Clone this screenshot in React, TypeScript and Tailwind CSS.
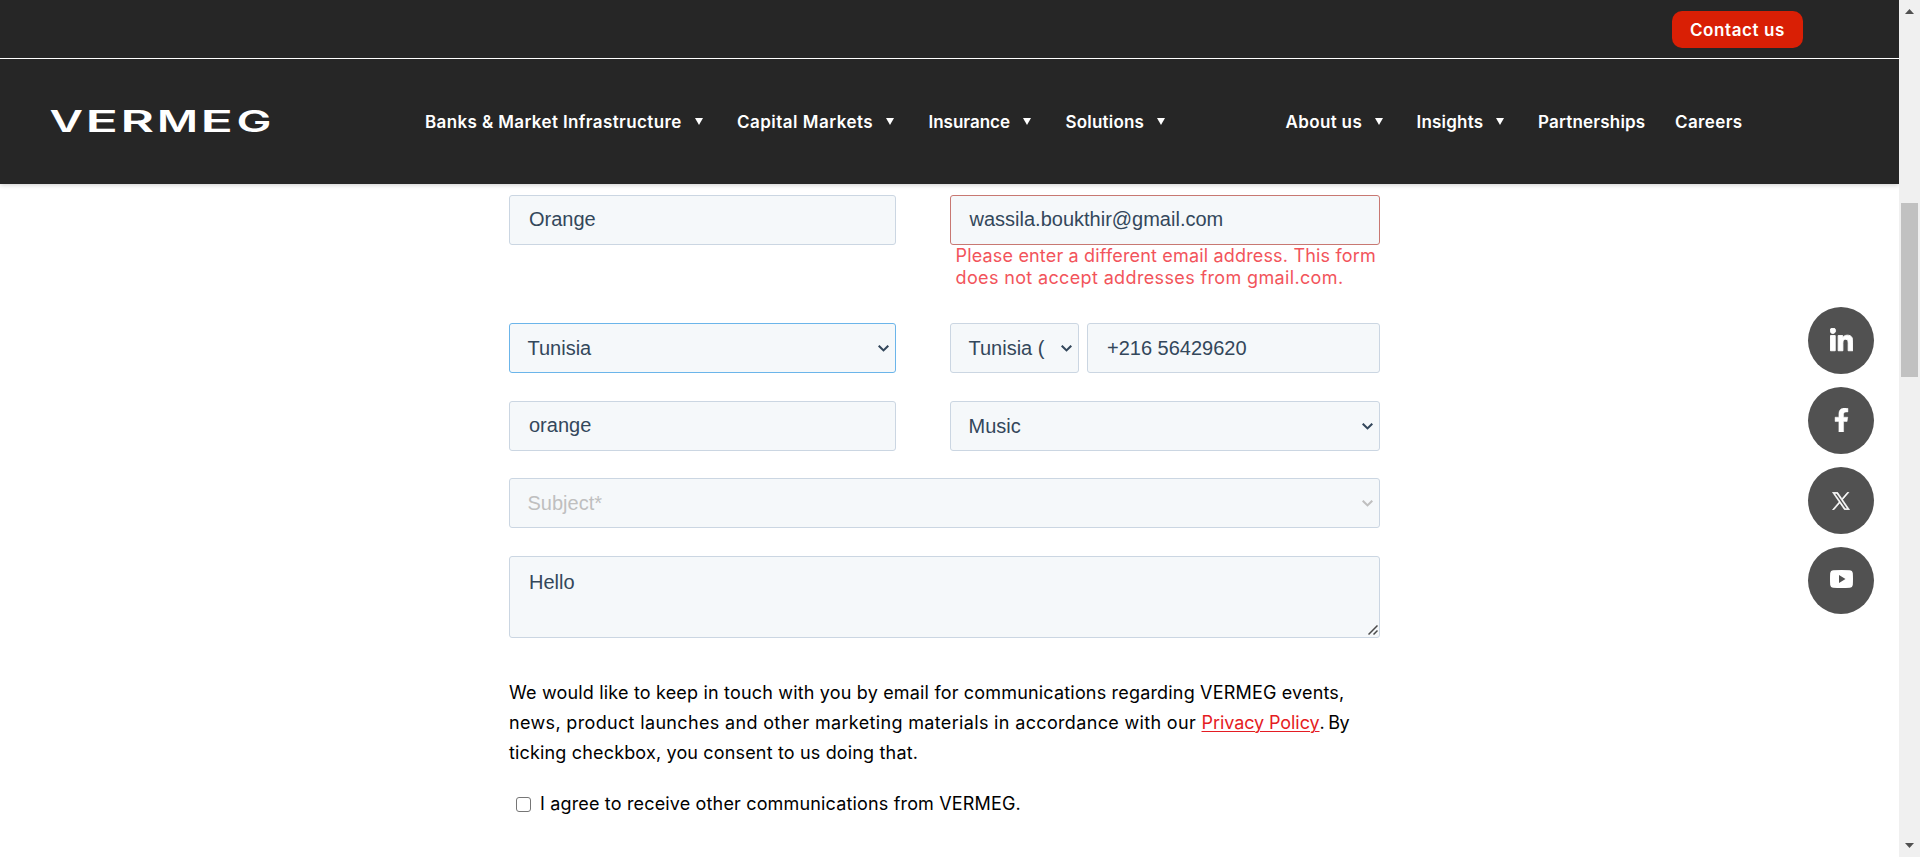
import type { ReactNode } from "react";
import { FaFacebookF, FaLinkedinIn } from "react-icons/fa";

function Caret() {
  return (
    <svg className="ml-[13px] h-[7px] w-2 shrink-0" viewBox="0 0 8 7">
      <path d="M0 0h8L4 7z" fill="#fff" />
    </svg>
  );
}

function NavItem({ label, className, caret = true }: { label: string; className: string; caret?: boolean }) {
  return (
    <a className={`flex shrink-0 items-center whitespace-nowrap ${className}`}>
      <span>{label}</span>
      {caret && <Caret />}
    </a>
  );
}

function Logo() {
  const letters: [string, number, number][] = [
    ["V", 1.5, 33.5],
    ["E", 37.5, 32.5],
    ["R", 72.5, 33.5],
    ["M", 109, 41],
    ["E", 152.5, 32.5],
    ["G", 188.5, 35],
  ];
  return (
    <svg className="h-[50px] w-[230px]" viewBox="0 0 230 50" role="img" aria-label="VERMEG">
      {letters.map(([c, x, w], i) => (
        <text
          key={i}
          x={x}
          y={34.5}
          textLength={w}
          lengthAdjust="spacingAndGlyphs"
          className="fill-white font-['Inter',sans-serif] text-[30.3px] font-semibold"
        >
          {c}
        </text>
      ))}
    </svg>
  );
}

function Chevron({ className = "text-[#33475b]" }: { className?: string }) {
  return (
    <svg className={`mr-1.5 mt-px h-[7px] w-[11px] shrink-0 ${className}`} viewBox="0 0 11 7">
      <path d="M0.7 0.7L5.5 5.4L10.3 0.7" fill="none" stroke="currentColor" strokeWidth="2.1" />
    </svg>
  );
}

function Field({ children, className = "" }: { children: ReactNode; className?: string }) {
  return (
    <div
      className={`flex h-[50px] items-center rounded-[3px] border bg-[#f5f8fa] pl-[19px] font-['Liberation_Sans',Arial,sans-serif] text-[20px] leading-6 text-[#33475b] ${className}`}
    >
      {children}
    </div>
  );
}

function Select({ children, className = "", chevron }: { children: ReactNode; className?: string; chevron?: string }) {
  return (
    <div
      className={`flex h-[50px] items-center justify-between rounded-[3px] border bg-[#f5f8fa] pl-[17.5px] font-['Liberation_Sans',Arial,sans-serif] text-[20px] leading-6 ${className}`}
    >
      <span className="whitespace-nowrap">{children}</span>
      <Chevron className={chevron} />
    </div>
  );
}

function Social({ children }: { children: ReactNode }) {
  return (
    <a className="flex h-[67px] w-[66px] items-center justify-center rounded-[50%] bg-[#515151] text-white">{children}</a>
  );
}

export default function App() {
  return (
    <div className="relative flex h-[857px] w-full overflow-hidden bg-white font-['Inter',sans-serif]">
      <div className="flex w-[1899px] shrink-0 flex-col">
        <header className="h-[184px] shrink-0 bg-[#262626] text-[17px] font-semibold leading-6 text-white shadow-[0_1px_5px_rgba(0,0,0,0.2)]">
          <div className="flex h-[59px] items-start justify-end border-b border-white pr-[96px] pt-[11px]">
            <a className="flex h-[37px] w-[131px] items-center justify-center rounded-[10px] bg-[#d91f05] tracking-[0.6px]">
              Contact us
            </a>
          </div>
          <div className="flex h-[125px] items-center">
            <div className="w-[425px] shrink-0 pl-[48px]">
              <Logo />
            </div>
            <nav className="flex">
              <NavItem label="Banks & Market Infrastructure" className="w-[312px] tracking-[0.38px]" />
              <NavItem label="Capital Markets" className="w-[191.5px] tracking-[0.48px]" />
              <NavItem label="Insurance" className="w-[137px] tracking-[0px]" />
              <NavItem label="Solutions" className="w-[220px] tracking-[0.2px]" />
              <NavItem label="About us" className="w-[131px] tracking-[0.35px]" />
              <NavItem label="Insights" className="w-[121.5px] tracking-[0.2px]" />
              <NavItem label="Partnerships" className="w-[137px] tracking-[0.2px]" caret={false} />
              <NavItem label="Careers" className="tracking-[0.38px]" caret={false} />
            </nav>
          </div>
        </header>

        <main className="ml-[509px] w-[871px] pt-[11px]">
          <div className="flex h-[128px] items-start justify-between">
            <Field className="w-[387px] border-[#cbd6e2] pb-0.5">Orange</Field>
            <div className="w-[430px]">
              <Field className="border-[#c87872] pb-0.5">
                <span className="-ml-[0.5px]">wassila.boukthir@gmail.com</span>
              </Field>
              <p className="whitespace-nowrap pl-[5.5px] text-[18px] leading-[22px] text-[#f2545b]">
                <span className="tracking-[0.17px]">Please enter a different email address. This form</span>
                <br />
                <span className="tracking-[0.36px]">does not accept addresses from gmail.com.</span>
              </p>
            </div>
          </div>

          <div className="mb-7 flex justify-between">
            <Select className="w-[387px] border-[#6bb5ea] text-[#33475b]">Tunisia</Select>
            <div className="flex w-[430px] justify-between">
              <Select className="w-[129px] border-[#cbd6e2] text-[#33475b]">Tunisia (</Select>
              <Field className="w-[293px] border-[#cbd6e2]">+216 56429620</Field>
            </div>
          </div>

          <div className="mb-[27px] flex justify-between">
            <Field className="w-[387px] border-[#cbd6e2] pb-0.5">orange</Field>
            <Select className="w-[430px] border-[#cbd6e2] text-[#33475b]">Music</Select>
          </div>

          <Select className="mb-7 border-[#cbd6e2] text-[#bfbfbf]" chevron="text-[#bfbfbf]">
            Subject*
          </Select>

          <div className="flex h-[82px] items-end justify-between rounded-[3px] border border-[#cbd6e2] bg-[#f5f8fa] pl-[19px]">
            <span className="self-start pt-[13px] font-['Liberation_Sans',Arial,sans-serif] text-[20px] leading-6 text-[#33475b]">
              Hello
            </span>
            <svg className="mb-[2px] mr-[1px] h-[10px] w-[10px]" viewBox="0 0 10 10">
              <path d="M0.5 9.5L9.5 0.5M5.5 9.5L9.5 5.5" stroke="#4a4a4a" strokeWidth="1.5" fill="none" />
            </svg>
          </div>

          <p className="mt-10 whitespace-nowrap text-[18px] leading-[30px] text-black">
            <span className="tracking-[0.178px]">
              We would like to keep in touch with you by email for communications regarding VERMEG events,
            </span>
            <br />
            <span className="tracking-[0.34px]">
              news, product launches and other marketing materials in accordance with our{" "}
            </span>
            <a className="tracking-[-0.08px] text-[#e51c23] underline decoration-1 underline-offset-2">Privacy Policy</a>
            <span className="tracking-[-0.7px]">. By</span>
            <br />
            <span className="tracking-[0.16px]">ticking checkbox, you consent to us doing that.</span>
          </p>

          <label className="mt-[21px] flex h-[30px] items-center pl-[7px] text-[18px] leading-[30px] text-black">
            <span className="mr-[9px] h-[15px] w-[15px] rounded-[3px] border border-[#767676] bg-white" />
            <span className="whitespace-nowrap tracking-[0.16px]">
              I agree to receive other communications from VERMEG.
            </span>
          </label>
        </main>
      </div>

      <aside className="flex w-[21px] shrink-0 flex-col items-center bg-[#f0f0f0] pt-[9px]">
        <svg className="h-[5px] w-[9px]" viewBox="0 0 9 5">
          <path d="M4.5 0L9 5H0z" fill="#505050" />
        </svg>
        <div className="mt-[189px] h-[174px] w-[17px] bg-[#c1c1c1]" />
        <svg className="mb-[9px] mt-auto h-[5px] w-[9px]" viewBox="0 0 9 5">
          <path d="M4.5 5L9 0H0z" fill="#505050" />
        </svg>
      </aside>

      <div className="absolute right-[46px] top-[307px] flex flex-col gap-[13px]">
        <Social>
          <FaLinkedinIn className="h-[26px] w-[23px] stroke-white stroke-[18]" />
        </Social>
        <Social>
          <FaFacebookF className="mb-0.5 h-6 w-[15px] stroke-white stroke-[10]" />
        </Social>
        <Social>
          <svg className="h-[18px] w-[18px]" viewBox="-20 -20 1240 1267" fill="currentColor" stroke="currentColor" strokeWidth="44">
            <path d="M714.163 519.284L1160.89 0H1055.03L667.137 450.887L357.328 0H0L468.492 681.821L0 1226.37H105.866L515.491 750.218L842.672 1226.37H1200L714.137 519.284H714.163ZM569.165 687.828L521.697 619.934L144.011 79.6944H306.615L611.412 515.685L658.88 583.579L1055.08 1150.3H892.476L569.165 687.854V687.828Z" />
          </svg>
        </Social>
        <Social>
          <svg className="mb-[3px] h-[18px] w-[23px]" viewBox="0 0 23 18">
            <path
              d="M3 .2Q11.5-.2 20 .2Q22.5.4 22.8 3Q23.2 9 22.8 15Q22.5 17.6 20 17.8Q11.5 18.2 3 17.8Q.5 17.6.2 15Q-.2 9 .2 3Q.5.4 3 .2zM9 5v8l6.5-4z"
              fill="currentColor"
              fillRule="evenodd"
            />
          </svg>
        </Social>
      </div>
    </div>
  );
}
